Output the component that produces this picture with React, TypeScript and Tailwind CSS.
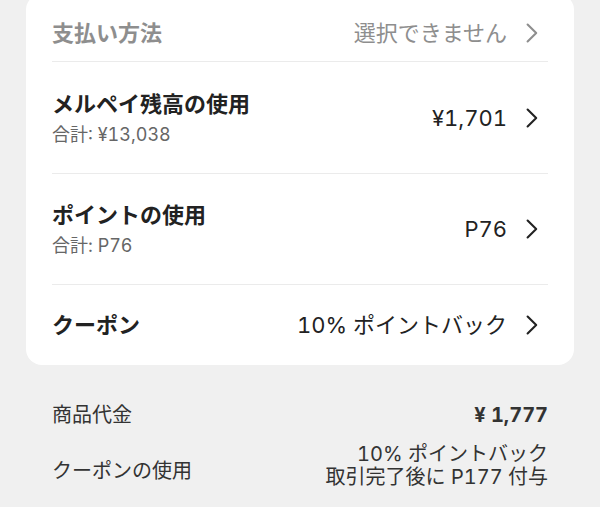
import { ReactNode } from "react";

function Chevron({ muted }: { muted?: boolean }) {
    return (
        <svg width="12" height="20" viewBox="0 0 12 20" fill="none"
            className={muted ? "text-[#8e8e8e] mr-[10px] shrink-0" : "text-[#222222] mr-[10px] shrink-0"}>
            <path d="M1.6 1.6 L10.2 10 L1.6 18.4" stroke="currentColor" strokeWidth="2.1" strokeLinecap="round" strokeLinejoin="round" />
        </svg>
    );
}

interface PaymentRowInput {
    title: string;
    total?: string;
    value: ReactNode;
    height: string;
}

function PaymentRow({ title, total, value, height }: PaymentRowInput) {
    return (
        <div className={`flex flex-row justify-between items-center border-b border-[#ebebeb] ${height}`}>
            <div className="flex flex-col">
                <h2 className="text-[22px] leading-[30px] font-bold text-[#222222]">{title}</h2>
                {
                    total &&
                    <span className="text-[18px] leading-[24px] mt-[4px] text-[#666666]">{total}</span>
                }
            </div>
            <div className="flex flex-row items-center gap-[19px]">
                <span className="text-[22px] leading-[30px] text-[#222222]">{value}</span>
                <Chevron />
            </div>
        </div>
    );
}

export default function App() {
    return (
        <div className="flex flex-col min-h-screen bg-[#f0f0f0] px-[26px] tabular-nums font-['Inter','Noto_Sans_CJK_JP',sans-serif]">
            <div className="-mt-[6px] bg-white rounded-[16px] px-[26px]">
                <div className="flex flex-row justify-between items-center h-[68px] pt-[11px] border-b border-[#ebebeb]">
                    <h2 className="text-[22px] leading-[30px] font-bold text-[#8e8e8e]">支払い方法</h2>
                    <div className="flex flex-row items-center gap-[19px]">
                        <span className="text-[22px] leading-[30px] text-[#8e8e8e]">選択できません</span>
                        <Chevron muted />
                    </div>
                </div>
                <PaymentRow title="メルペイ残高の使用" total="合計: ¥13,038" value="¥1,701" height="h-[112px]" />
                <PaymentRow title="ポイントの使用" total="合計: P76" value="P76" height="h-[111px]" />
                <div className="flex flex-row justify-between items-center h-[80px]">
                    <h2 className="text-[22px] leading-[30px] font-bold text-[#222222]">クーポン</h2>
                    <div className="flex flex-row items-center gap-[19px]">
                        <span className="text-[22px] leading-[30px] text-[#222222]">10% ポイントバック</span>
                        <Chevron />
                    </div>
                </div>
            </div>

            <div className="flex flex-col px-[26px] mt-[36px] text-[#333333]">
                <div className="flex flex-row justify-between items-center h-[28px]">
                    <span className="text-[20px] leading-[28px]">商品代金</span>
                    <span className="text-[20px] leading-[28px] font-bold">¥ 1,777</span>
                </div>
                <div className="flex flex-row justify-between items-center mt-[14px]">
                    <span className="text-[20px] leading-[28px] pt-[10px]">クーポンの使用</span>
                    <div className="flex flex-col items-end text-[20px] leading-[23px]">
                        <span>10% ポイントバック</span>
                        <span>取引完了後に P177 付与</span>
                    </div>
                </div>
            </div>
        </div>
    );
}
